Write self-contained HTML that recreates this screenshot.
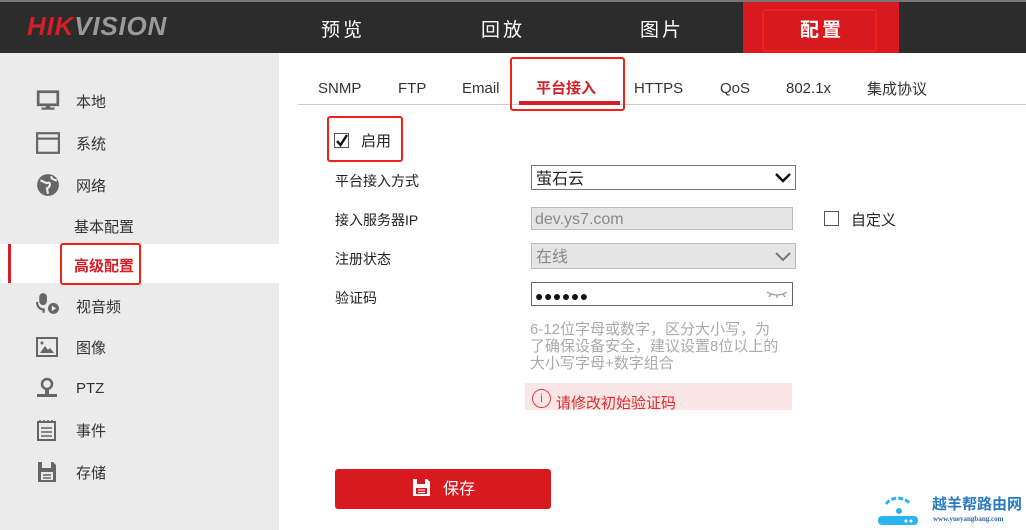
<!DOCTYPE html>
<html><head><meta charset="utf-8"><style>
*{margin:0;padding:0;box-sizing:border-box}
body{width:1026px;height:530px;overflow:hidden;background:#fff;font-family:"Liberation Sans","Noto Sans CJK SC",sans-serif;position:relative;color:#333;line-height:1}
.a{position:absolute;white-space:nowrap}
.t{transform:translateY(2px)}
.hdr{left:0;top:0;width:1026px;height:53px;background:#2c2c2c;border-top:2px solid #777}
.nav{top:19px;color:#fff;font-size:19px;letter-spacing:3px}
.side{left:0;top:53px;width:279px;height:477px;background:#ebebeb}
.it{left:76px;font-size:15px;color:#333}
.ic{left:36px}
.tab{top:79px;font-size:15px;color:#333}
.lbl{left:335px;font-size:14px;color:#222}
.redbox{border:2px solid #f0201a;border-radius:3px}
</style></head><body>
<div class="a hdr"></div>
<div class="a" style="left:27px;top:13px;font-size:26px;font-weight:bold;font-style:italic;letter-spacing:0.8px"><span style="color:#d41f27">HIK</span><span style="color:#9a9a9a">VISION</span></div>
<div class="a nav t" style="left:321px">预览</div>
<div class="a nav t" style="left:481px">回放</div>
<div class="a nav t" style="left:640px">图片</div>
<div class="a" style="left:743px;top:2px;width:156px;height:51px;background:#d81920"></div>
<div class="a redbox" style="left:762px;top:9px;width:115px;height:43px"></div>
<div class="a nav t" style="left:800px;font-weight:bold">配置</div>

<div class="a side"></div>
<div class="a" style="left:0;top:244px;width:279px;height:39px;background:#fff"></div>
<div class="a" style="left:8px;top:244px;width:3px;height:39px;background:#d41f27"></div>
<svg class="a ic" style="top:90px" width="24" height="22" viewBox="0 0 22 20"><rect x="2" y="1.5" width="18" height="12" fill="none" stroke="#666" stroke-width="2.5"/><rect x="9" y="13" width="4" height="4" fill="#666"/><rect x="5" y="16" width="12" height="2" fill="#666"/></svg>
<div class="a it t" style="top:93px">本地</div>
<svg class="a ic" style="top:132px" width="24" height="22" viewBox="0 0 22 20"><rect x="1" y="1" width="20" height="18" fill="none" stroke="#666" stroke-width="2"/><rect x="1" y="5" width="20" height="2" fill="#666"/></svg>
<div class="a it t" style="top:135px">系统</div>
<svg class="a ic" style="top:173px" width="24" height="24" viewBox="0 0 22 22"><circle cx="11" cy="11" r="10" fill="#666"/><path d="M4 7c3 0 4 3 7 2s2 4 -1 5l1 5M14 3c0 3 3 3 5 4" stroke="#ebebeb" stroke-width="2" fill="none"/></svg>
<div class="a it t" style="top:177px">网络</div>
<div class="a t" style="left:74px;top:218px;font-size:15px;color:#333">基本配置</div>
<div class="a redbox" style="left:60px;top:243px;width:81px;height:42px"></div>
<div class="a t" style="left:74px;top:257px;font-size:15px;color:#d41f27;font-weight:bold">高级配置</div>
<svg class="a ic" style="top:292px" width="24" height="24" viewBox="0 0 22 22"><rect x="3" y="1" width="7" height="11" rx="3.5" fill="#666"/><path d="M1 9c0 5 3 7 6 7v3" stroke="#666" stroke-width="2" fill="none"/><circle cx="16" cy="15" r="5" fill="#666"/><path d="M14.5 12.5v5l4-2.5z" fill="#ebebeb"/></svg>
<div class="a it t" style="top:298px">视音频</div>
<svg class="a ic" style="top:337px" width="22" height="20" viewBox="0 0 22 20"><rect x="1" y="1" width="20" height="18" fill="none" stroke="#666" stroke-width="2"/><path d="M4 16l5-7 3 4 2-2 4 5z" fill="#666"/><circle cx="6" cy="6" r="1.5" fill="#666"/></svg>
<div class="a it t" style="top:339px">图像</div>
<svg class="a ic" style="top:377px" width="22" height="22" viewBox="0 0 22 22"><circle cx="11" cy="7" r="5" fill="none" stroke="#666" stroke-width="2.5"/><rect x="9" y="12" width="4" height="5" fill="#666"/><rect x="1" y="17" width="20" height="3" fill="#666"/></svg>
<div class="a it t" style="top:379px">PTZ</div>
<svg class="a ic" style="top:419px" width="22" height="22" viewBox="0 0 22 22"><rect x="2" y="3" width="17" height="18" fill="none" stroke="#666" stroke-width="2"/><path d="M5 9h11M5 13h11M5 17h11M4 1v3M8 1v3M12 1v3M16 1v3" stroke="#666" stroke-width="1.6"/></svg>
<div class="a it t" style="top:422px">事件</div>
<svg class="a ic" style="top:461px" width="22" height="22" viewBox="0 0 22 22"><path d="M2 1h15l3 3v17H2z" fill="#666"/><rect x="6" y="1" width="9" height="6" fill="#ebebeb"/><rect x="5" y="11" width="12" height="8" fill="#ebebeb"/><path d="M7 14h8M7 17h8" stroke="#666" stroke-width="1.5"/></svg>
<div class="a it t" style="top:464px">存储</div>

<div class="a tab t" style="left:318px">SNMP</div>
<div class="a tab t" style="left:398px">FTP</div>
<div class="a tab t" style="left:462px">Email</div>
<div class="a tab t" style="left:536px;color:#d41f27;font-weight:bold">平台接入</div>
<div class="a tab t" style="left:634px">HTTPS</div>
<div class="a tab t" style="left:720px">QoS</div>
<div class="a tab t" style="left:786px">802.1x</div>
<div class="a tab t" style="left:867px;top:80px">集成协议</div>
<div class="a" style="left:298px;top:104px;width:728px;height:1px;background:#ccc"></div>
<div class="a" style="left:519px;top:101px;width:101px;height:4px;background:#d41f27"></div>
<div class="a redbox" style="left:510px;top:57px;width:115px;height:54px"></div>

<div class="a redbox" style="left:327px;top:116px;width:76px;height:46px"></div>
<div class="a" style="left:334px;top:133px;width:15px;height:15px;border:1px solid #555;background:#fff"></div>
<svg class="a" style="left:336px;top:134px" width="12" height="13" viewBox="0 0 12 13"><path d="M1 7l3.5 4L11 1" stroke="#111" stroke-width="2.4" fill="none"/></svg>
<div class="a t" style="left:361px;top:132px;font-size:15px;color:#222">启用</div>

<div class="a lbl t" style="top:172px">平台接入方式</div>
<div class="a" style="left:531px;top:165px;width:265px;height:25px;border:1px solid #777;background:#fff"></div>
<div class="a t" style="left:536px;top:170px;font-size:16px;color:#222">萤石云</div>
<svg class="a" style="left:775px;top:172px" width="16" height="11" viewBox="0 0 16 11"><path d="M1 2l7 7 7-7" stroke="#111" stroke-width="2.5" fill="none"/></svg>

<div class="a lbl t" style="top:211px">接入服务器IP</div>
<div class="a" style="left:531px;top:207px;width:262px;height:23px;border:1px solid #bbb;background:#e5e5e5"></div>
<div class="a t" style="left:535px;top:210px;font-size:16px;color:#888">dev.ys7.com</div>
<div class="a" style="left:824px;top:211px;width:15px;height:15px;border:1px solid #555;background:#fff"></div>
<div class="a t" style="left:851px;top:211px;font-size:15px;color:#222">自定义</div>

<div class="a lbl t" style="top:250px">注册状态</div>
<div class="a" style="left:531px;top:243px;width:265px;height:26px;border:1px solid #bbb;background:#e5e5e5"></div>
<div class="a t" style="left:536px;top:248px;font-size:16px;color:#888">在线</div>
<svg class="a" style="left:775px;top:251px" width="16" height="11" viewBox="0 0 16 11"><path d="M1 2l7 7 7-7" stroke="#777" stroke-width="2" fill="none"/></svg>

<div class="a lbl t" style="top:289px">验证码</div>
<div class="a" style="left:531px;top:282px;width:262px;height:24px;border:1.5px solid #666;background:#fff"></div>
<div class="a t" style="left:535px;top:287px;font-size:14px;color:#111;letter-spacing:0.5px">●●●●●●</div>
<svg class="a" style="left:766px;top:289px" width="22" height="10" viewBox="0 0 22 10"><path d="M1 3q10 6 20 0M5 5l-2 3M11 6v3M17 5l2 3" stroke="#999" stroke-width="1.3" fill="none"/></svg>

<div class="a t" style="left:530px;top:319px;font-size:15px;line-height:17px;color:#aaa">6-12位字母或数字，区分大小写，为<br>了确保设备安全，建议设置8位以上的<br>大小写字母+数字组合</div>
<div class="a" style="left:525px;top:383px;width:267px;height:27px;background:#fbe6e7"></div>
<div class="a" style="left:532px;top:389px;width:19px;height:19px;border:1.5px solid #e04040;border-radius:50%;color:#e04040;font-size:12px;text-align:center;line-height:16px">i</div>
<div class="a t" style="left:556px;top:394px;font-size:15px;color:#e02a2a">请修改初始验证码</div>

<div class="a" style="left:335px;top:469px;width:216px;height:40px;background:#d81920;border-radius:3px"></div>
<svg class="a" style="left:412px;top:478px" width="19" height="19" viewBox="0 0 19 19"><path d="M1 1h14l3 3v14H1z" fill="#fff"/><rect x="5" y="1" width="8" height="5" fill="#d81920"/><rect x="4" y="10" width="11" height="6" fill="#d81920"/><path d="M6 12h7M6 14.5h7" stroke="#fff" stroke-width="1"/></svg>
<div class="a t" style="left:443px;top:480px;font-size:16px;color:#fff">保存</div>

<svg class="a" style="left:878px;top:490px" width="40" height="36" viewBox="0 0 40 36"><path d="M8 14a14 12 0 0 1 24 0" stroke="#2bb4ef" stroke-width="3" fill="none" stroke-dasharray="5 2"/><circle cx="21" cy="21" r="3" fill="#2bb4ef"/><rect x="0" y="26" width="40" height="9" rx="4" fill="#2bb4ef"/><circle cx="28" cy="31" r="1.5" fill="#fff"/><circle cx="33" cy="31" r="1.5" fill="#fff"/></svg>
<div class="a" style="left:932px;top:497px;font-size:15px;font-weight:bold;color:#2a7bc0">越羊帮路由网</div>
<div class="a" style="left:933px;top:516px;font-size:7px;font-weight:bold;color:#2a6aa8;font-family:'Liberation Serif',serif">www.yueyangbang.com</div>
</body></html>
